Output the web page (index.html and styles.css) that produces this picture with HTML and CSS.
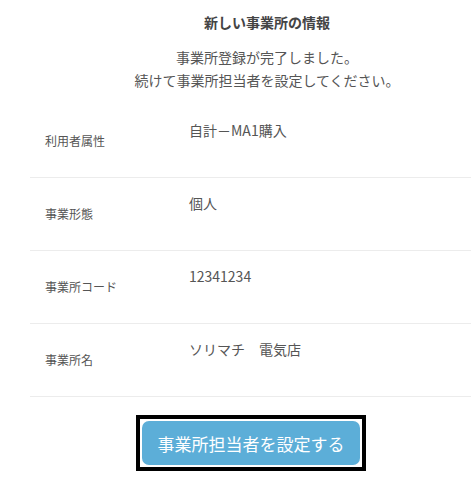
FILE: index.html
```html
<!DOCTYPE html>
<html lang="ja">
<head>
  <meta charset="UTF-8">
  <meta name="viewport" content="width=device-width, initial-scale=1.0">
  <title>新しい事業所の情報</title>
  <link rel="stylesheet" href="styles.css">
</head>
<body>
  <div class="page">
    <div class="heading">
      <h1 class="title">新しい事業所の情報</h1>
      <p class="message">事業所登録が完了しました。<br>続けて事業所担当者を設定してください。</p>
    </div>

    <div class="info">
      <div class="info-row">
        <div class="info-label">利用者属性</div>
        <div class="info-value">自計－MA1購入</div>
      </div>
      <div class="info-row">
        <div class="info-label">事業形態</div>
        <div class="info-value">個人</div>
      </div>
      <div class="info-row">
        <div class="info-label">事業所コード</div>
        <div class="info-value">12341234</div>
      </div>
      <div class="info-row">
        <div class="info-label">事業所名</div>
        <div class="info-value">ソリマチ　電気店</div>
      </div>
    </div>

    <div class="actions">
      <div class="focus-frame">
        <button class="btn-primary">事業所担当者を設定する</button>
      </div>
    </div>
  </div>
</body>
</html>
```

FILE: styles.css
```css
/* Page layout */
body {
  font-family: "Noto Sans CJK JP", "Noto Sans", sans-serif;
  background-color: #fff;
  color: #555;
  margin: 0;
}

.page {
  margin-left: 30px;
  padding-top: 12px;
}

/* heading block is centred on the wider panel, offset to the right */
.heading {
  padding-left: 33px;
  text-align: center;
}

.title {
  margin: 0;
  font-size: 14px;
  line-height: 20px;
  font-weight: bold;
  color: #444;
}

.message {
  margin: 14px 0 0;
  font-size: 14px;
  line-height: 23px;
}

/* Info rows */
.info {
  margin-top: 13px;
}

.info-row {
  display: flex;
  height: 72px;
  border-bottom: 1px solid #ececec;
}

.info-label {
  width: 144px;
  padding-left: 15px;
  align-self: center;
  font-size: 12px;
  line-height: 16px;
}

.info-value {
  padding-top: 15px;
  font-size: 14px;
  line-height: 20px;
}

/* Button */
.actions {
  display: flex;
  padding-left: 106px;
  margin-top: 18px;
}

.focus-frame {
  border: 4px solid #000;
  padding: 2px;
}

.btn-primary {
  display: block;
  width: 218px;
  height: 44px;
  border: none;
  border-radius: 7px;
  background-color: #5caed8;
  color: #fff;
  font-family: inherit;
  font-size: 17px;
  cursor: pointer;
}
```
